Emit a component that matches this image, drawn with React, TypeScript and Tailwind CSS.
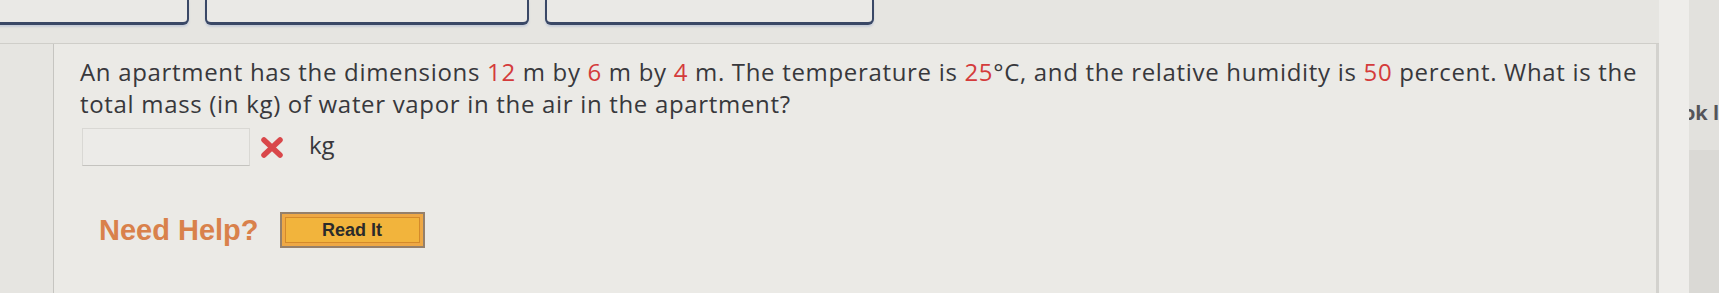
import React from "react";

function TopButton({ label, className }: { label: string; className: string }) {
  return (
    <div
      className={`h-[25px] flex items-end justify-center border-x-2 border-b-[3px] border-[#3a4866] rounded-b-[6px] bg-[#eae9e6] shadow-[0_2px_2px_rgba(140,160,200,0.35)] ${className}`}
    >
      <span className="mb-[19px] text-[20px] font-bold leading-none tracking-wide text-[#b9b9b9] [font-family:'Liberation_Sans',Arial,sans-serif] whitespace-nowrap">
        {label}
      </span>
    </div>
  );
}

function RedX() {
  return (
    <svg width="26" height="23" viewBox="0 0 26 23">
      <path d="M5 4 L21 19 M21 4 L5 19" stroke="#d9474a" strokeWidth="5.5" strokeLinecap="round" fill="none" />
    </svg>
  );
}

export default function App() {
  const red = "text-[#d43b3b]";
  return (
    <div className="flex w-[1719px] h-[293px] overflow-hidden bg-[#e6e5e1] text-[#38383c] [font-family:'Open_Sans',sans-serif]">
      <div className="flex flex-col w-[1663px]">
        <div className="h-[44px] flex items-start border-b border-[#cfcec9]">
          <TopButton label="MY NOTES" className="w-[200px] -ml-[11px]" />
          <TopButton label="ASK YOUR TEACHER" className="w-[324px] ml-[16px]" />
          <TopButton label="PRACTICE ANOTHER" className="w-[329px] ml-[16px]" />
        </div>
        <div className="flex flex-1">
          <div className="w-[54px] border-r border-[#c6c5c1]"></div>
          <div className="flex-1 flex flex-col bg-[#ebeae6] border-r-[3px] border-[#d3d2ce] pl-[26px] pt-[12px]">
            <p className="w-[1576px] text-[24px] leading-[32px] tracking-[0.68px]">
              An apartment has the dimensions <span className={red}>12</span> m by <span className={red}>6</span> m by{" "}
              <span className={red}>4</span> m. The temperature is <span className={red}>25</span>°C, and the relative
              humidity is <span className={red}>50</span> percent. What is the total mass (in kg) of water vapor in the
              air in the apartment?
            </p>
            <div className="flex items-center mt-[8px]">
              <div className="ml-[2px] w-[168px] h-[38px] border border-[#d9d8d4] border-b-[#c4c3bf] bg-[#ecebe8]"></div>
              <div className="ml-[9px] flex items-center">
                <RedX />
              </div>
              <span className="ml-[24px] text-[24px] leading-none -mt-[4px]">kg</span>
            </div>
            <div className="flex items-center mt-[46px] h-[36px]">
              <span className="ml-[19px] text-[29px] font-bold leading-none text-[#d9814b] [font-family:'Liberation_Sans',Arial,sans-serif]">
                Need Help?
              </span>
              <div className="ml-[21px] w-[145px] h-[36px] border-2 border-[#95806a] bg-[#eea845] p-[3px]">
                <div className="w-full h-full border border-[#d48a2a] bg-[#f2b43c] flex items-center justify-center">
                  <span className="text-[18px] font-bold leading-none text-[#2b2b2b] [font-family:'Liberation_Sans',Arial,sans-serif]">
                    Read It
                  </span>
                </div>
              </div>
            </div>
          </div>
        </div>
      </div>
      <div className="w-[30px] bg-[#eeedea]"></div>
      <div className="flex-1 flex flex-col">
        <div className="h-[150px] bg-[#e2e1dd] pt-[102px] overflow-hidden">
          <span className="-ml-[6px] text-[20px] font-bold leading-none text-[#55555a] [font-family:'Open_Sans',sans-serif] whitespace-nowrap">
            ok l
          </span>
        </div>
        <div className="flex-1 bg-[#dad9d5]"></div>
      </div>
    </div>
  );
}
